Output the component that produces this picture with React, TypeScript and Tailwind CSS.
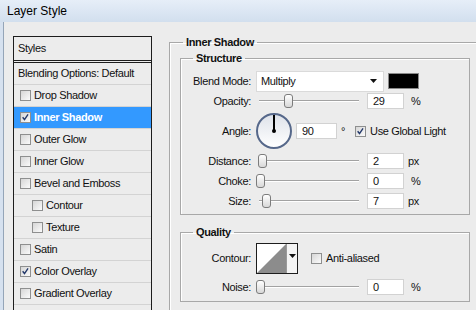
import React from "react";

const font = { fontFamily: '"Liberation Sans", Arial, sans-serif' };

function Check({ checked = false }: { checked?: boolean }) {
    return (
        <div className="w-[11px] h-[11px] border border-[#8e8f8f] bg-gradient-to-br from-[#d6d6d6] to-[#fbfbfb] flex items-center justify-center shrink-0">
            {checked && (
                <svg width="11" height="11" viewBox="0 0 11 11">
                    <path d="M2 5.2 L4.3 8 L8.6 1.8" stroke="#23386a" strokeWidth="1.7" fill="none" />
                </svg>
            )}
        </div>
    );
}

function StyleRow({ label, checked, indent, selected }: { label: string; checked?: boolean; indent?: boolean; selected?: boolean }) {
    return (
        <div
            className={
                "h-[22px] flex items-center border-b border-[#d3d3d3] " +
                (selected ? "bg-[#3399ff] text-white font-bold" : "text-[#111]")
            }
        >
            <div className={indent ? "ml-[18px]" : "ml-[6px]"}>
                <Check checked={checked} />
            </div>
            <span className="ml-[3px]">{label}</span>
        </div>
    );
}

function Slider({ thumb }: { thumb: number }) {
    return (
        <div className="relative w-[103px] h-[16px] shrink-0">
            <div className="absolute left-[3px] right-0 top-[7px] h-[2px] border-t border-[#a2a2a2] border-b border-b-white" />
            <div
                className="absolute top-[1px] w-[9px] h-[14px] rounded-[3px] border border-[#7c7c7c] bg-gradient-to-b from-white to-[#d8d8d8]"
                style={{ left: thumb }}
            />
        </div>
    );
}

function NumBox({ value, w = "w-[37px]" }: { value: string; w?: string }) {
    return (
        <div className={w + " h-[16px] bg-white border border-[#d2d2d2] pl-[5px] leading-[14px] text-[#111]"}>{value}</div>
    );
}

function Label({ text }: { text: string }) {
    return <div className="w-[70px] text-right mr-[5px] text-[#111] shrink-0">{text}</div>;
}

export default function App() {
    return (
        <div className="w-[476px] h-[310px] overflow-hidden bg-[#d8e3f0] text-[11px] tracking-[-0.35px]" style={font}>
            {/* title bar */}
            <div className="h-[22px] bg-gradient-to-b from-[#e6eef8] to-[#d2dfee] flex items-center pl-[7px] text-[12px] tracking-normal text-black">
                Layer Style
            </div>

            <div className="flex h-[288px]">
                <div className="w-[4px] shrink-0 bg-[#d6e1ef] border-r border-[#95a5b8]" />
                <div className="flex-1 min-w-0 overflow-hidden bg-[#ececec] flex">
                    {/* styles list */}
                    <div className="ml-[9px] mt-[14px] w-[139px] h-[300px] border border-[#1d1d1d] bg-[#ececec] shrink-0">
                        <div className="h-[26px] flex items-center pl-[4px] text-[#111] border-b-[3px] border-double border-[#1d1d1d]">
                            Styles
                        </div>
                        <div className="h-[22px] flex items-center pl-[4px] border-b border-[#d3d3d3] text-[#111]">
                            Blending Options: Default
                        </div>
                        <StyleRow label="Drop Shadow" />
                        <StyleRow label="Inner Shadow" checked selected />
                        <StyleRow label="Outer Glow" />
                        <StyleRow label="Inner Glow" />
                        <StyleRow label="Bevel and Emboss" />
                        <StyleRow label="Contour" indent />
                        <StyleRow label="Texture" indent />
                        <StyleRow label="Satin" />
                        <StyleRow label="Color Overlay" checked />
                        <StyleRow label="Gradient Overlay" />
                        <StyleRow label="" />
                    </div>

                    {/* settings */}
                    <fieldset className="ml-[17px] mt-[13px] w-[330px] h-[320px] border border-[#a8a8a8] shadow-[inset_1px_1px_0_#fff] shrink-0">
                        <legend className="ml-[13px] px-[3px] font-bold leading-[14px] text-[#111]">Inner Shadow</legend>

                        <fieldset className="ml-[10px] mt-[2px] w-[290px] border border-[#a8a8a8] shadow-[inset_1px_1px_0_#fff] pb-[5px]">
                            <legend className="ml-[12px] px-[3px] font-bold leading-[14px] text-[#111]">Structure</legend>

                            <div className="mt-[5px] h-[22px] flex items-center">
                                <Label text="Blend Mode:" />
                                <div className="w-[128px] h-[21px] bg-white border border-[#dadada] flex items-center pl-[4px] text-[#111] justify-between shrink-0">
                                    <span>Multiply</span>
                                    <svg width="7" height="4" viewBox="0 0 7 4" className="mr-[6px]">
                                        <path d="M0 0 H7 L3.5 4 Z" fill="#111" />
                                    </svg>
                                </div>
                                <div className="ml-[4px] w-[31px] h-[16px] bg-black border border-[#8a8a8a] shrink-0" />
                            </div>

                            <div className="mt-[1px] h-[16px] flex items-center">
                                <Label text="Opacity:" />
                                <Slider thumb={28} />
                                <div className="ml-[8px]"><NumBox value="29" /></div>
                                <span className="ml-[7px] text-[#111]">%</span>
                            </div>

                            <div className="mt-[4px] h-[36px] flex items-center">
                                <Label text="Angle:" />
                                <div className="w-[36px] h-[36px] rounded-full border-2 border-[#56688a] bg-gradient-to-b from-[#dfe3ea] to-white flex flex-col items-center shrink-0">
                                    <div className="w-[2px] h-[16px] bg-black" />
                                    <div className="w-[4px] h-[4px] -mt-[2px] bg-black rounded-full" />
                                </div>
                                <div className="ml-[4px]"><NumBox value="90" w="w-[41px]" /></div>
                                <span className="ml-[4px] self-start mt-[10px] text-[#111]">°</span>
                                <div className="ml-[10px]"><Check checked /></div>
                                <span className="ml-[4px] text-[#111]">Use Global Light</span>
                            </div>

                            <div className="mt-[4px] h-[16px] flex items-center">
                                <Label text="Distance:" />
                                <Slider thumb={2} />
                                <div className="ml-[8px]"><NumBox value="2" /></div>
                                <span className="ml-[4px] text-[#111]">px</span>
                            </div>

                            <div className="mt-[4px] h-[16px] flex items-center">
                                <Label text="Choke:" />
                                <Slider thumb={0} />
                                <div className="ml-[8px]"><NumBox value="0" /></div>
                                <span className="ml-[7px] text-[#111]">%</span>
                            </div>

                            <div className="mt-[4px] h-[16px] flex items-center">
                                <Label text="Size:" />
                                <Slider thumb={6} />
                                <div className="ml-[8px]"><NumBox value="7" /></div>
                                <span className="ml-[4px] text-[#111]">px</span>
                            </div>
                        </fieldset>

                        <fieldset className="ml-[10px] mt-[10px] w-[290px] border border-[#a8a8a8] shadow-[inset_1px_1px_0_#fff] pb-[6px]">
                            <legend className="ml-[12px] px-[3px] font-bold leading-[14px] text-[#111]">Quality</legend>

                            <div className="mt-[4px] h-[31px] flex items-center">
                                <Label text="Contour:" />
                                <div className="w-[42px] h-[31px] border border-[#1d1d1d] flex bg-white shrink-0">
                                    <svg width="29" height="29" viewBox="0 0 29 29">
                                        <path d="M0 29 L29 0 V29 Z" fill="#8c8c8c" />
                                    </svg>
                                    <div className="flex-1 bg-[#f4f4f4] border-l border-[#9a9a9a] flex justify-center pt-[10px]">
                                        <svg width="7" height="4" viewBox="0 0 7 4">
                                            <path d="M0 0 H7 L3.5 4 Z" fill="#111" />
                                        </svg>
                                    </div>
                                </div>
                                <div className="ml-[13px]"><Check /></div>
                                <span className="ml-[4px] text-[#111]">Anti-aliased</span>
                            </div>

                            <div className="mt-[5px] h-[16px] flex items-center">
                                <Label text="Noise:" />
                                <Slider thumb={0} />
                                <div className="ml-[8px]"><NumBox value="0" /></div>
                                <span className="ml-[7px] text-[#111]">%</span>
                            </div>
                        </fieldset>
                    </fieldset>
                </div>
            </div>
        </div>
    );
}
